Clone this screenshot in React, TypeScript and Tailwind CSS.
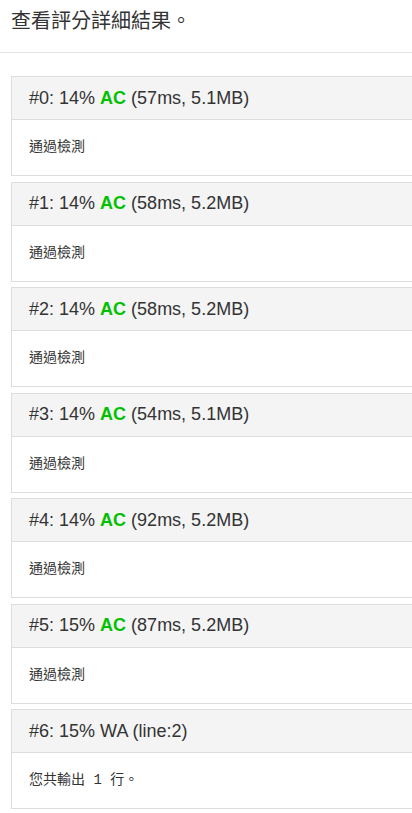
import React from "react";

type Item = {
  id: number;
  pct: string;
  status: "AC" | "WA";
  extra: string;
  body: string;
};

const items: Item[] = [
  { id: 0, pct: "14%", status: "AC", extra: "(57ms, 5.1MB)", body: "通過檢測" },
  { id: 1, pct: "14%", status: "AC", extra: "(58ms, 5.2MB)", body: "通過檢測" },
  { id: 2, pct: "14%", status: "AC", extra: "(58ms, 5.2MB)", body: "通過檢測" },
  { id: 3, pct: "14%", status: "AC", extra: "(54ms, 5.1MB)", body: "通過檢測" },
  { id: 4, pct: "14%", status: "AC", extra: "(92ms, 5.2MB)", body: "通過檢測" },
  { id: 5, pct: "15%", status: "AC", extra: "(87ms, 5.2MB)", body: "通過檢測" },
  { id: 6, pct: "15%", status: "WA", extra: "(line:2)", body: "您共輸出 1 行。" },
];

export default function App() {
  return (
    <div className="w-[412px] min-h-[813px] overflow-hidden bg-white text-[#333]">
      <div className="h-[53px] border-b border-[#e5e5e5] pl-[11px] pt-[6px]">
        <div
          className="text-[20px] leading-[28px] text-[#333]"
          style={{ fontFamily: '"Noto Sans CJK TC", "Liberation Sans", sans-serif' }}
        >
          查看評分詳細結果。
        </div>
      </div>
      <div className="pl-[11px] pt-[23px]">
        {items.map((it) => (
          <div
            key={it.id}
            className="mb-[5.5px] w-[430px] border border-[#dddddd] bg-white"
          >
            <div
              className="flex h-[43px] items-center border-b border-[#dddddd] bg-[#f4f4f4] px-[17px] text-[18px] text-[#333]"
              style={{ fontFamily: '"Liberation Sans", Arial, sans-serif' }}
            >
              <span className="whitespace-pre">
                #{it.id}: {it.pct}{" "}
                {it.status === "AC" ? (
                  <span className="font-bold text-[#00c000]">AC</span>
                ) : (
                  <span>WA</span>
                )}{" "}
                {it.extra}
              </span>
            </div>
            <div
              className="flex h-[55px] items-center px-[17px] text-[14px] text-[#333]"
              style={{ fontFamily: '"Liberation Mono", "Noto Sans CJK TC", monospace' }}
            >
              <span className="whitespace-pre">{it.body}</span>
            </div>
          </div>
        ))}
      </div>
    </div>
  );
}
